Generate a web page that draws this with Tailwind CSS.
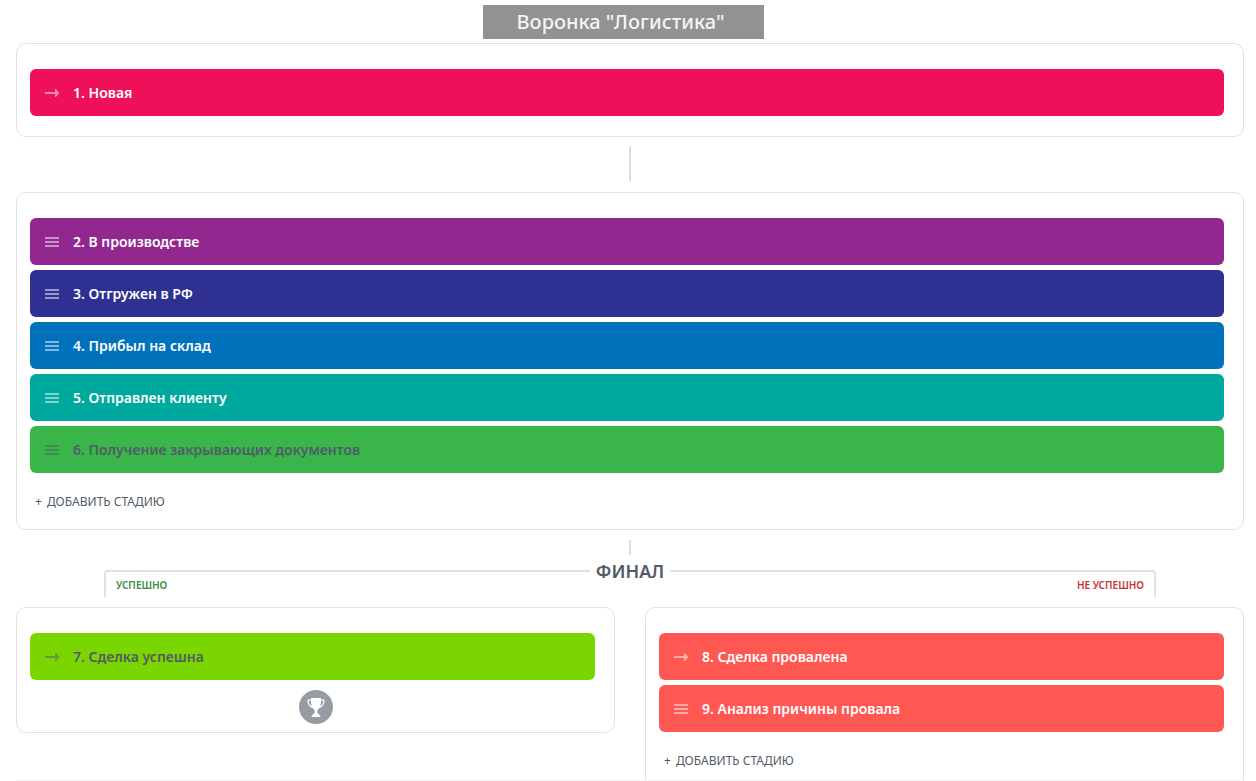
<!DOCTYPE html>
<html lang="ru">
<head>
<meta charset="utf-8">
<meta name="viewport" content="width=device-width, initial-scale=1">
<title>Воронка "Логистика"</title>
<script src="https://cdn.jsdelivr.net/npm/@tailwindcss/browser@4"></script>
</head>
<body class="bg-white pl-4 pr-3 pt-[5px] font-['Noto_Sans','Open_Sans',sans-serif] text-[#525c69]">
<svg class="hidden" aria-hidden="true">
  <symbol id="arrow" viewBox="0 0 14 11"><path d="M0 5h10V2h1l3 3.500v1L11 10h-1V7H0z" fill="currentColor"/></symbol>
  <symbol id="menu" viewBox="0 0 14 11"><path d="M0 1h14v2H0zM0 5h14v2H0zM0 9h14v2H0z" fill="currentColor"/></symbol>
</svg>

<header class="flex justify-center pr-[13px]">
  <h1 class="flex h-[34px] w-[281px] items-center justify-center bg-[#929292] pr-[6px] text-xl font-medium text-[#f4f4f4]">Воронка "Логистика"</h1>
</header>

<main>
  <section class="mt-1 rounded-[10px] border border-[#e1e1e1] pt-[25px] pr-[19px] pb-5 pl-[13px]">
    <div class="flex h-[47px] items-center gap-[14px] rounded-md bg-[#ef105a] pl-[15px] text-sm font-semibold text-white">
      <svg class="h-[11px] w-[14px] opacity-50"><use href="#arrow"/></svg><span>1. Новая</span>
    </div>
  </section>

  <div class="mx-auto mt-[9px] h-[35px] w-[2px] bg-[#dadde1]"></div>

  <section class="mt-[11px] rounded-[10px] border border-[#e1e1e1] pt-[25px] pr-[19px] pb-[17px] pl-[13px]">
    <ol class="flex flex-col gap-[5px] text-sm font-semibold text-white">
      <li class="flex h-[47px] items-center gap-[14px] rounded-md bg-[#92278f] pl-[15px]"><svg class="h-[11px] w-[14px] opacity-50"><use href="#menu"/></svg><span>2. В производстве</span></li>
      <li class="flex h-[47px] items-center gap-[14px] rounded-md bg-[#2e3192] pl-[15px]"><svg class="h-[11px] w-[14px] opacity-50"><use href="#menu"/></svg><span>3. Отгружен в РФ</span></li>
      <li class="flex h-[47px] items-center gap-[14px] rounded-md bg-[#0072bc] pl-[15px]"><svg class="h-[11px] w-[14px] opacity-50"><use href="#menu"/></svg><span>4. Прибыл на склад</span></li>
      <li class="flex h-[47px] items-center gap-[14px] rounded-md bg-[#00a99d] pl-[15px]"><svg class="h-[11px] w-[14px] opacity-50"><use href="#menu"/></svg><span>5. Отправлен клиенту</span></li>
      <li class="flex h-[47px] items-center gap-[14px] rounded-md bg-[#39b54a] pl-[15px] text-[#525c69]"><svg class="h-[11px] w-[14px] opacity-50"><use href="#menu"/></svg><span>6. Получение закрывающих документов</span></li>
    </ol>
    <button type="button" class="mt-[19px] ml-[5px] flex h-5 items-center gap-[5px] text-xs"><span>+</span><span>ДОБАВИТЬ СТАДИЮ</span></button>
  </section>

  <div class="mx-auto mt-[10px] h-[15px] w-[2px] bg-[#dadde1]"></div>

  <div class="mx-[88px] mt-[6px] flex items-start">
    <div class="mt-[9px] h-[27px] flex-1 rounded-tl border-t-2 border-l-2 border-[#e1e1e1] pl-[10px] text-[10px] leading-[26px] font-semibold text-[#3a8d40]">УСПЕШНО</div>
    <h2 class="w-20 text-center text-lg leading-5 font-semibold">ФИНАЛ</h2>
    <div class="mt-[9px] h-[27px] flex-1 rounded-tr border-t-2 border-r-2 border-[#e1e1e1] pr-[10px] text-right text-[10px] leading-[26px] font-semibold text-[#c4343a]">НЕ УСПЕШНО</div>
  </div>

  <div class="mt-[10px] grid grid-cols-2 items-start gap-[30px]">
    <section class="rounded-[10px] border border-[#e1e1e1] pt-[25px] pb-2 pl-[13px] pr-[13px]">
      <div class="mr-[6px] flex h-[47px] items-center gap-[14px] rounded-md bg-[#7bd500] pl-[15px] text-sm font-semibold text-[#525c69]">
        <svg class="h-[11px] w-[14px] opacity-50"><use href="#arrow"/></svg><span>7. Сделка успешна</span>
      </div>
      <svg class="mx-auto mt-[10px] block size-[34px]" viewBox="0 0 34 34" role="img" aria-label="Успех">
        <circle cx="17" cy="17" r="17" fill="#959ca4"/>
        <path d="M12 8h10v1.500h3.500c.2 4.500-1.500 7.500-5 8.500-.8 1-1.700 1.800-2.200 2.200v2.800c1 .6 2.200 1 2.200 2.500h.7V27h-8.400v-1.500h.7c0-1.500 1.200-1.900 2.200-2.500v-2.800c-.5-.4-1.400-1.200-2.200-2.200-3.500-1-5.200-4-5-8.500H12zM9.700 10.700c.1 2.700 1 4.600 2.900 5.500-.5-1.700-.7-3.500-.7-5.500zm14.600 0h-2.200c0 2-.2 3.800-.7 5.500 1.900-.9 2.800-2.800 2.900-5.500z" fill="#fff" fill-rule="evenodd"/>
      </svg>
    </section>

    <section class="rounded-[10px] border border-[#e1e1e1] pt-[25px] pr-[19px] pb-[17px] pl-[13px]">
      <ol class="flex flex-col gap-[5px] text-sm font-semibold text-white">
        <li class="flex h-[47px] items-center gap-[14px] rounded-md bg-[#ff5752] pl-[15px]"><svg class="h-[11px] w-[14px] opacity-50"><use href="#arrow"/></svg><span>8. Сделка провалена</span></li>
        <li class="flex h-[47px] items-center gap-[14px] rounded-md bg-[#ff5752] pl-[15px]"><svg class="h-[11px] w-[14px] opacity-50"><use href="#menu"/></svg><span>9. Анализ причины провала</span></li>
      </ol>
      <button type="button" class="mt-[19px] ml-[5px] flex h-5 items-center gap-[5px] text-xs"><span>+</span><span>ДОБАВИТЬ СТАДИЮ</span></button>
    </section>
  </div>
</main>
<footer class="fixed inset-x-4 bottom-0 h-px bg-[#f5f5f5]"></footer>
</body>
</html>
